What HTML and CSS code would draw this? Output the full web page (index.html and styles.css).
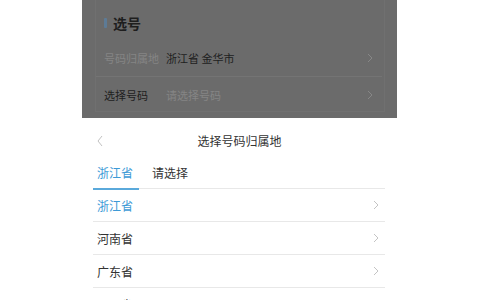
FILE: index.html
```html
<!DOCTYPE html>
<html lang="zh">
<head>
<meta charset="utf-8">
<link rel="stylesheet" href="styles.css">
</head>
<body>
<div class="phone">
  <section class="dim">
    <div class="card">
      <h2 class="sec-title"><span class="bar"></span>选号</h2>
      <div class="row">
        <span class="label muted">号码归属地</span>
        <span class="val">浙江省 金华市</span>
        <svg class="chev dim-chev" viewBox="0 0 6 10"><path d="M1 1l4 4-4 4"/></svg>
      </div>
      <div class="row last">
        <span class="label">选择号码</span>
        <span class="val muted">请选择号码</span>
        <svg class="chev dim-chev" viewBox="0 0 6 10"><path d="M1 1l4 4-4 4"/></svg>
      </div>
    </div>
  </section>
  <section class="sheet">
    <div class="sheet-head">
      <svg class="back" viewBox="0 0 6 12"><path d="M5 1L1 6l4 5"/></svg>
      <span class="sheet-title">选择号码归属地</span>
    </div>
    <div class="tabs">
      <span class="tab active">浙江省</span>
      <span class="tab">请选择</span>
    </div>
    <ul class="list">
      <li class="item active"><span>浙江省</span><svg class="chev" viewBox="0 0 6 10"><path d="M1 1l4 4-4 4"/></svg></li>
      <li class="item"><span>河南省</span><svg class="chev" viewBox="0 0 6 10"><path d="M1 1l4 4-4 4"/></svg></li>
      <li class="item"><span>广东省</span><svg class="chev" viewBox="0 0 6 10"><path d="M1 1l4 4-4 4"/></svg></li>
      <li class="item"><span>四川省</span><svg class="chev" viewBox="0 0 6 10"><path d="M1 1l4 4-4 4"/></svg></li>
    </ul>
  </section>
</div>
</body>
</html>
```

FILE: styles.css
```css
* { box-sizing: border-box; margin: 0; padding: 0; }
html, body { width: 480px; height: 300px; overflow: hidden; background: #fff; }
body {
  font-family: "Noto Sans CJK SC", "Noto Sans", sans-serif;
  color: #333;
}
.phone {
  margin-left: 82px;
  width: 315px;
  height: 300px;
  display: flex;
  flex-direction: column;
}
.dim {
  height: 118px;
  background: #6b6b6b;
  padding: 0 12px 0 13px;
  flex: none;
}
.card {
  height: 112px;
  padding: 14px 0 0 0;
  border-left: 1px solid #707070;
  border-right: 1px solid #707070;
  border-bottom: 1px solid #707070;
}
.sec-title {
  font-size: 14px;
  font-weight: bold;
  line-height: 18px;
  color: #1e1e1e;
  display: flex;
  align-items: center;
  padding-left: 8px;
}
.bar {
  width: 3px;
  height: 10px;
  background: #5d7b96;
  border-radius: 1px;
  margin-right: 6px;
}
.row {
  display: flex;
  align-items: center;
  height: 37px;
  margin: 8px 2px 0 0;
  padding-left: 8px;
  border-bottom: 1px solid #747474;
  font-size: 11px;
  color: #1e1e1e;
}
.row.last { margin-top: 0; height: 35px; border-bottom: none; }
.label { width: 62px; }
.val { flex: 1; }
.muted { color: #858585; }
.chev {
  width: 6px;
  height: 10px;
  fill: none;
  stroke: #c4c4c4;
  stroke-width: 1;
}
.dim-chev { stroke: #878787; margin-right: 9px; }

.sheet { flex: 1; background: #fff; }
.sheet-head {
  height: 46px;
  display: flex;
  align-items: center;
  justify-content: center;
  position: relative;
}
.back {
  position: absolute;
  left: 15px;
  top: 17px;
  width: 6px;
  height: 12px;
  fill: none;
  stroke: #c2c2c2;
  stroke-width: 1;
}
.sheet-title { font-size: 12px; color: #333; line-height: 16px; }
.tabs {
  display: flex;
  gap: 8px;
  margin: 0 12px 0 11px;
  height: 25px;
  border-bottom: 1px solid #e8e8e8;
  font-size: 12px;
}
.tab {
  padding: 0 5px;
  line-height: 17px;
  height: 25px;
  color: #333;
}
.tab.active {
  color: #3d9ad6;
  border-bottom: 2px solid #5aa9db;
  margin-bottom: -1px;
  height: 26px;
  padding-left: 4px;
  padding-right: 6px;
}
.list { list-style: none; margin: 0 12px 0 11px; }
.item {
  height: 33px;
  display: flex;
  align-items: center;
  justify-content: space-between;
  padding: 0 6px 0 4px;
  border-bottom: 1px solid #e8e8e8;
  font-size: 12px;
  color: #333;
}
.item.active { color: #3d9ad6; }
```
